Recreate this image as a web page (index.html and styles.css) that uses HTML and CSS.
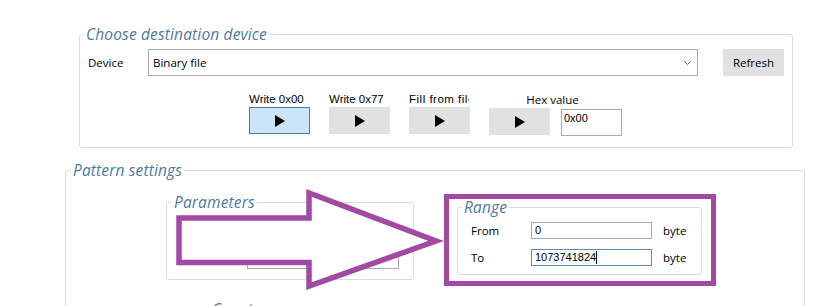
FILE: index.html
```html
<!DOCTYPE html>
<html lang="en">
<head>
    <meta charset="UTF-8">
    <meta name="viewport" content="width=device-width, initial-scale=1.0">
    <title>Pattern Writer</title>
    <link rel="stylesheet" href="styles.css">
</head>
<body>
    <div class="window">
        <fieldset class="group device-group">
            <legend>Choose destination device</legend>
            <div class="device-row">
                <span class="field-label">Device</span>
                <div class="combo">
                    <span>Binary file</span>
                    <svg class="chevron" width="7" height="4" viewBox="0 0 7 4"><polyline points="0.5,0.5 3.5,3.5 6.5,0.5" fill="none" stroke="#606060" stroke-width="1"/></svg>
                </div>
                <button class="btn refresh">Refresh</button>
            </div>
            <div class="action-row">
                <div class="action">
                    <div class="action-label">Write 0x00</div>
                    <button class="btn play active"><svg width="10" height="12" viewBox="0 0 10 12"><polygon points="0,0 10,6 0,12" fill="#000"/></svg></button>
                </div>
                <div class="action">
                    <div class="action-label">Write 0x77</div>
                    <button class="btn play"><svg width="10" height="12" viewBox="0 0 10 12"><polygon points="0,0 10,6 0,12" fill="#000"/></svg></button>
                </div>
                <div class="action">
                    <div class="action-label wide">Fill from file</div>
                    <button class="btn play"><svg width="10" height="12" viewBox="0 0 10 12"><polygon points="0,0 10,6 0,12" fill="#000"/></svg></button>
                </div>
                <div class="hex">
                    <div class="hex-label">Hex value</div>
                    <div class="hex-controls">
                        <button class="btn play"><svg width="10" height="12" viewBox="0 0 10 12"><polygon points="0,0 10,6 0,12" fill="#000"/></svg></button>
                        <div class="textbox hex-box">0x00</div>
                    </div>
                </div>
            </div>
        </fieldset>

        <fieldset class="group pattern-group">
            <legend>Pattern settings</legend>
            <div class="pattern-row">
                <fieldset class="group params-group">
                    <legend>Parameters</legend>
                    <div class="textbox params-box">1</div>
                </fieldset>
                <fieldset class="group range-group">
                    <legend>Range</legend>
                    <div class="range-rows">
                        <div class="range-row">
                            <span class="range-label">From</span>
                            <div class="textbox range-box">0</div>
                            <span class="unit">byte</span>
                        </div>
                        <div class="range-row">
                            <span class="range-label">To</span>
                            <div class="textbox range-box focused">1073741824<span class="caret"></span></div>
                            <span class="unit">byte</span>
                        </div>
                    </div>
                </fieldset>
            </div>
            <div class="count-title">Count</div>
        </fieldset>

        <!-- annotation drawn over the screenshot -->
        <svg class="annotation" width="828" height="306" viewBox="0 0 828 306">
            <polygon points="179,218 309,218 309,193 436,241 309,286 309,262.5 179,262.5" fill="#fff" stroke="#a349a4" stroke-width="5.5" stroke-linejoin="miter"/>
            <rect x="446.5" y="196.5" width="267" height="87" fill="none" stroke="#a349a4" stroke-width="5"/>
        </svg>
    </div>
</body>
</html>
```

FILE: styles.css
```css
* {
    margin: 0;
    padding: 0;
    box-sizing: border-box;
}

body {
    background: #fff;
    font-family: 'Open Sans', 'Noto Sans', sans-serif;
    font-size: 11.5px;
    color: #000;
    overflow: hidden;
}

.window {
    position: relative;
    width: 828px;
    height: 306px;
    overflow: hidden;
    padding-top: 24px;
}

/* group boxes */
.group {
    border: 1px solid #dcdcdc;
    border-radius: 3px;
    min-width: 0;
}

.group legend {
    font-style: italic;
    font-size: 15.5px;
    letter-spacing: 0.15px;
    line-height: 20px;
    color: #4f7a9c;
    padding: 0 2px;
}

.device-group {
    width: 714px;
    margin-left: 79px;
    padding: 5px 8px 11px 8px;
}

.device-group > legend {
    margin-left: -4px;
}

.device-row {
    display: flex;
    align-items: center;
    height: 27px;
}

.field-label {
    width: 60px;
}

.combo {
    width: 550px;
    height: 27px;
    border: 1px solid #a9a9a9;
    display: flex;
    align-items: center;
    justify-content: space-between;
    padding: 0 6px 0 4px;
}

.chevron {
    margin-top: 1px;
}

.btn {
    border: none;
    background: #e1e1e1;
    font-family: 'Open Sans', 'Noto Sans', sans-serif;
    font-size: 11.5px;
    color: #000;
    display: flex;
    align-items: center;
    justify-content: center;
}

.refresh {
    width: 61px;
    height: 27px;
    margin-left: 25px;
}

.action-row {
    display: flex;
    gap: 19px;
    margin-top: 16px;
    margin-left: 161px;
}

.action {
    width: 61px;
}

.action-label {
    font-family: 'Liberation Sans', Arial, sans-serif;
    font-size: 11.5px;
    line-height: 14px;
    white-space: nowrap;
    overflow: hidden;
}

.action-label.wide {
    width: 60px;
    letter-spacing: 0.5px;
}

.play {
    width: 61px;
    height: 27px;
    margin-top: 1px;
}

.play svg {
    margin-left: 1px;
}

.play.active {
    background: #cce4f7;
    border: 1px solid #4a7ea6;
}

.hex-label {
    text-align: center;
    line-height: 16px;
    margin-right: 6px;
}

.hex-controls {
    display: flex;
    align-items: flex-start;
    gap: 11px;
}

.hex-controls .play {
    margin-top: 0;
}

.textbox {
    border: 1px solid #a9a9a9;
    background: #fff;
    font-family: 'Liberation Sans', Arial, sans-serif;
    font-size: 11px;
}

.hex-box {
    width: 61px;
    height: 27px;
    margin-top: 1px;
    padding: 2px 0 0 2px;
    line-height: 13px;
}

.pattern-group {
    width: 740px;
    height: 200px;
    margin: 12px 0 0 65px;
    padding: 12px 0 0 0;
}

.pattern-group > legend {
    margin-left: 5px;
}

.pattern-row {
    display: flex;
    align-items: flex-start;
    gap: 43px;
    padding-left: 100px;
}

.params-group {
    width: 248px;
    height: 88px;
    padding-top: 37px;
}

.params-group > legend {
    margin-left: 5px;
}

.params-box {
    width: 152px;
    height: 20px;
    margin-left: 80px;
    padding: 3px 0 0 20px;
    line-height: 13px;
}

.range-group {
    width: 245px;
    height: 78px;
    margin-top: 5px;
    padding-top: 5px;
}

.range-group > legend {
    margin-left: 4px;
}

.range-rows {
    display: flex;
    flex-direction: column;
    gap: 10px;
    padding-left: 13px;
}

.range-row {
    display: flex;
    align-items: center;
    height: 17px;
}

.range-label {
    width: 60px;
}

.range-box {
    width: 121px;
    height: 17px;
    padding-left: 3px;
    line-height: 15px;
    display: flex;
    align-items: center;
}

.range-box.focused {
    border-color: #5b8db5;
}

.caret {
    width: 1px;
    height: 13px;
    background: #000;
}

.unit {
    margin-left: 11px;
}

.count-title {
    font-style: italic;
    font-size: 15.5px;
    line-height: 20px;
    color: #4f7a9c;
    margin: 19px 0 0 146px;
}

.annotation {
    position: absolute;
    left: 0;
    top: 0;
    pointer-events: none;
}
```
